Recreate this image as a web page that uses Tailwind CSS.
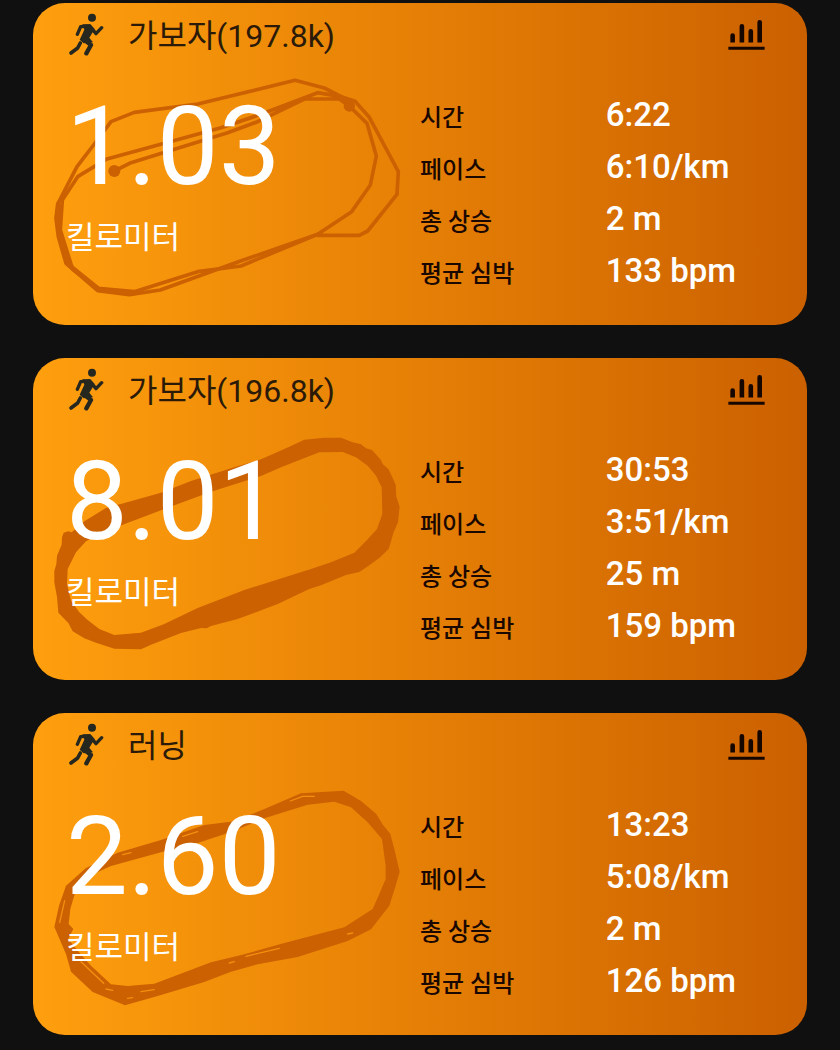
<!DOCTYPE html>
<html lang="ko">
<head>
  <meta charset="UTF-8">
  <meta name="viewport" content="width=device-width, initial-scale=1">
  <title>러닝 기록</title>
  <script src="https://cdn.jsdelivr.net/npm/@tailwindcss/browser@4"></script>
</head>
<body class="bg-[#101010] font-[Roboto,'Noto_Sans_CJK_KR',sans-serif]">

  <!-- Shared icons -->
  <svg class="hidden">
    <symbol id="runner" viewBox="115 40 108 129">
      <circle cx="187" cy="54" r="12" fill="currentColor" />
      <path d="M158 74 L182 74 L195 88 L179 114 L190 128 L162 131 L150 120 L164 90 Z" fill="currentColor" />
      <g fill="none" stroke="currentColor" stroke-linecap="round" stroke-linejoin="round">
        <path d="M143 104 L153 81 L180 79 L199 102 L216 84" stroke-width="10" />
        <path d="M162 119 L184 136 L170 161" stroke-width="13" />
        <path d="M152 130 L144 145 L124 160" stroke-width="11" />
      </g>
    </symbol>
    <symbol id="bars" viewBox="24 27 110 94">
      <path d="M30 98 V77 a7 7 0 0 1 14 0 V98 Z M58 98 V49 a7 7 0 0 1 14 0 V98 Z M85 98 V64 a7 7 0 0 1 14 0 V98 Z M112 98 V37 a7 7 0 0 1 14 0 V98 Z" fill="currentColor" />
      <path d="M24 111 H134 V120 H24 Z" fill="currentColor" />
    </symbol>
  </svg>

  <main class="flex flex-col gap-[33px] pt-[3px] pb-4 pl-[33px] pr-[33px]">

    <article class="relative overflow-hidden rounded-[32px] bg-linear-to-r from-[#ff9f0e] to-[#cb6000] pb-7">
      <svg class="absolute top-0 left-0 h-full w-1/2" viewBox="6 9 1161 966" preserveAspectRatio="xMinYMin meet" fill="none" stroke="#cb6100" stroke-width="11" stroke-linejoin="round" stroke-linecap="round">
        <path d="M250 513 L300 488 L590 398 L680 365 L820 297 L925 297 L955 318 L1008 370 L1036 468 L1018 555 L962 635 L860 703 L630 798 L500 815 L310 875 L200 865 L125 808 L88 690 L94 600 L140 530 L225 478 L570 383 L690 343 L860 278 L930 290 L972 304 L1015 352 L1102 515 L1098 583 L1010 693 L985 706 L860 706" />
        <path d="M955 303 L880 264 L792 241 L500 312 L310 337 L240 365 L190 432 L138 500 L80 612 L75 655 L82 710 L105 790 L200 872 L295 884 L388 870 L620 786 L860 703" />
        <path d="M82 612 L80 665 L88 712 L114 795 L205 868 L305 877" stroke-width="13" />
        <g fill="#cb6100" stroke="none">
          <circle cx="250" cy="513" r="18" />
          <circle cx="955" cy="318" r="17" />
        </g>
      </svg>
      <div class="relative">
        <header class="flex h-[62px] items-center pl-[35px] pr-[42px]">
          <svg class="h-[43px] w-9 text-[#262820]"><use href="#runner" /></svg>
          <h2 class="ml-6 flex-1 pt-1 text-[32px] leading-[48px] text-[#2b1a08]">가보자(197.8k)</h2>
          <button type="button" aria-label="통계" class="text-[#160600]"><svg class="h-[31px] w-[37px]"><use href="#bars" /></svg></button>
        </header>
        <div class="grid grid-cols-2 text-white">
          <div class="pl-[33px]">
            <p class="pt-[17px] text-[110px] leading-[130px]">1.03</p>
            <p class="pt-1 text-[31px] leading-[44px]">킬로미터</p>
          </div>
          <dl class="grid grid-cols-[24fr_26fr] auto-rows-[52px] items-center pt-6 text-[33px] font-medium">
            <dt class="pt-[6px] text-2xl text-[#1a0800]">시간</dt><dd>6:22</dd>
            <dt class="pt-[6px] text-2xl text-[#1a0800]">페이스</dt><dd>6:10/km</dd>
            <dt class="pt-[6px] text-2xl text-[#1a0800]">총 상승</dt><dd>2 m</dd>
            <dt class="pt-[6px] text-2xl text-[#1a0800]">평균 심박</dt><dd>133 bpm</dd>
          </dl>
        </div>
      </div>
    </article>

    <article class="relative overflow-hidden rounded-[32px] bg-linear-to-r from-[#ff9f0e] to-[#cb6000] pb-7">
      <svg class="absolute top-0 left-0 h-full w-1/2" viewBox="6 22 1161 966" preserveAspectRatio="xMinYMin meet">
        <path fill="#cb6100" fill-rule="evenodd" d="M93 560 L98 546 L112 542 L122 545 L160 512 L225 472 L280 457 L390 426 L480 391 L600 353 L690 326 L765 293 L820 267 L880 261 L930 261 L965 275 L990 281 L1005 293 L1023 298 L1050 328 L1055 340 L1072 355 L1084 380 L1094 402 L1096 438 L1106 468 L1101 515 L1088 545 L1073 595 L1045 622 L1015 644 L985 664 L945 673 L870 704 L835 715 L740 760 L620 805 L540 826 L527 833 L510 832 L450 847 L360 882 L330 896 L250 894 L195 876 L160 863 L125 842 L112 817 L82 786 L78 740 L70 695 L70 660 L76 640 L78 615 L92 582 Z
          M165 572 L210 548 L275 522 L400 475 L540 423 L690 376 L750 350 L865 305 L935 304 L975 320 L1010 345 L1035 375 L1052 410 L1054 490 L1038 535 L1008 568 L970 606 L900 635 L840 655 L640 718 L500 772 L400 820 L330 846 L250 853 L205 835 L170 808 L145 785 L120 750 L108 700 L110 655 L135 605 Z" />
      </svg>
      <div class="relative">
        <header class="flex h-[62px] items-center pl-[35px] pr-[42px]">
          <svg class="h-[43px] w-9 text-[#262820]"><use href="#runner" /></svg>
          <h2 class="ml-6 flex-1 pt-1 text-[32px] leading-[48px] text-[#2b1a08]">가보자(196.8k)</h2>
          <button type="button" aria-label="통계" class="text-[#160600]"><svg class="h-[31px] w-[37px]"><use href="#bars" /></svg></button>
        </header>
        <div class="grid grid-cols-2 text-white">
          <div class="pl-[33px]">
            <p class="pt-[17px] text-[110px] leading-[130px]">8.01</p>
            <p class="pt-1 text-[31px] leading-[44px]">킬로미터</p>
          </div>
          <dl class="grid grid-cols-[24fr_26fr] auto-rows-[52px] items-center pt-6 text-[33px] font-medium">
            <dt class="pt-[6px] text-2xl text-[#1a0800]">시간</dt><dd>30:53</dd>
            <dt class="pt-[6px] text-2xl text-[#1a0800]">페이스</dt><dd>3:51/km</dd>
            <dt class="pt-[6px] text-2xl text-[#1a0800]">총 상승</dt><dd>25 m</dd>
            <dt class="pt-[6px] text-2xl text-[#1a0800]">평균 심박</dt><dd>159 bpm</dd>
          </dl>
        </div>
      </div>
    </article>

    <article class="relative overflow-hidden rounded-[32px] bg-linear-to-r from-[#ff9f0e] to-[#cb6000] pb-7">
      <svg class="absolute top-0 left-0 h-full w-1/2" viewBox="6 22 1161 966" preserveAspectRatio="xMinYMin meet">
        <path fill="#cb6100" fill-rule="evenodd" d="M105 540 L165 487 L260 441 L390 403 L520 358 L610 347 L700 310 L810 263 L938 255 L990 286 L1036 325 L1056 358 L1078 385 L1090 430 L1106 498 L1094 540 L1075 600 L1020 671 L950 706 L800 754 L680 776 L600 798 L520 829 L380 871 L282 899 L185 859 L120 798 L105 745 L70 664 L84 600 Z
          M132 562 L175 510 L240 481 L390 440 L500 412 L600 379 L700 338 L830 297 L910 288 L960 305 L1010 350 L1053 400 L1064 480 L1064 520 L1045 565 L1025 610 L940 665 L760 712 L640 746 L540 770 L370 834 L290 841 L240 836 L180 780 L140 735 L112 700 L127 670 L113 655 L118 610 Z" />
        <!-- gaps where single laps drift apart -->
        <g fill="none" stroke="#f29010" stroke-width="4" stroke-linecap="round">
          <path d="M778 286 L815 272 L850 272" />
          <path d="M101 585 L86 650" />
          <path d="M150 768 L218 833" />
          <path d="M275 447 L300 441" />
          <path d="M455 392 L500 378" />
          <path d="M645 752 L745 728" />
          <path d="M595 772 L610 768" />
          <path d="M950 685 L965 682" />
          <path d="M225 850 L245 854 M290 878 L305 876 M330 858 L370 852" />
        </g>
      </svg>
      <div class="relative">
        <header class="flex h-[62px] items-center pl-[35px] pr-[42px]">
          <svg class="h-[43px] w-9 text-[#262820]"><use href="#runner" /></svg>
          <h2 class="ml-6 flex-1 pt-1 text-[32px] leading-[48px] text-[#2b1a08]">러닝</h2>
          <button type="button" aria-label="통계" class="text-[#160600]"><svg class="h-[31px] w-[37px]"><use href="#bars" /></svg></button>
        </header>
        <div class="grid grid-cols-2 text-white">
          <div class="pl-[33px]">
            <p class="pt-[17px] text-[110px] leading-[130px]">2.60</p>
            <p class="pt-1 text-[31px] leading-[44px]">킬로미터</p>
          </div>
          <dl class="grid grid-cols-[24fr_26fr] auto-rows-[52px] items-center pt-6 text-[33px] font-medium">
            <dt class="pt-[6px] text-2xl text-[#1a0800]">시간</dt><dd>13:23</dd>
            <dt class="pt-[6px] text-2xl text-[#1a0800]">페이스</dt><dd>5:08/km</dd>
            <dt class="pt-[6px] text-2xl text-[#1a0800]">총 상승</dt><dd>2 m</dd>
            <dt class="pt-[6px] text-2xl text-[#1a0800]">평균 심박</dt><dd>126 bpm</dd>
          </dl>
        </div>
      </div>
    </article>

  </main>

</body>
</html>
